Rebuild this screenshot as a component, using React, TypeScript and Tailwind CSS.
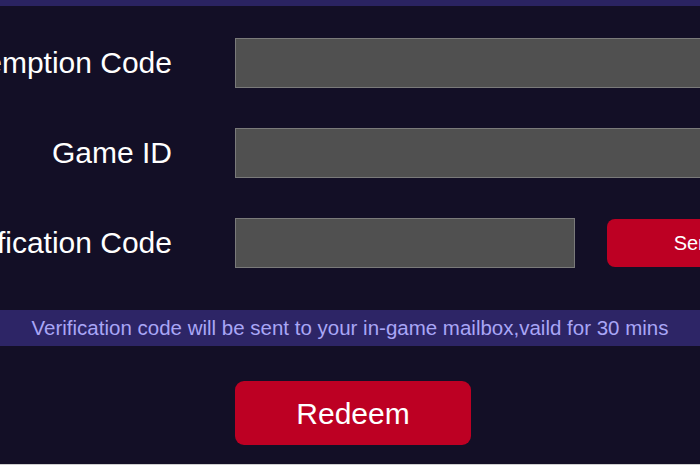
import React from 'react';

const font = { fontFamily: '"Liberation Sans", Arial, sans-serif' };

function Row({ label, children }: { label: string; children: React.ReactNode }) {
  return (
    <div className="flex items-center h-[50px]">
      <div className="w-[172px] shrink-0 flex justify-end whitespace-nowrap text-white text-[30px] leading-none">
        {label}
      </div>
      <div className="ml-[63px] flex items-center gap-[32px]">{children}</div>
    </div>
  );
}

function Field({ width }: { width: string }) {
  return (
    <input
      type="text"
      className={`${width} h-[50px] shrink-0 bg-[#505050] border border-[#7a7a7a] outline-none text-white px-2`}
    />
  );
}

export default function App() {
  return (
    <div className="w-[700px] h-[465px] overflow-hidden bg-[#130f26] flex flex-col" style={font}>
      <div className="h-[6px] shrink-0 bg-[#2a2361]" />
      <div className="flex flex-col gap-[40px] pt-[32px]">
        <Row label="Redemption Code">
          <Field width="w-[525px]" />
        </Row>
        <Row label="Game ID">
          <Field width="w-[525px]" />
        </Row>
        <Row label="Verification Code">
          <Field width="w-[340px]" />
          <button className="w-[180px] h-[48px] shrink-0 rounded-[8px] bg-[#bd0023] text-white text-[20px]">
            Send
          </button>
        </Row>
      </div>
      <div className="mt-[42px] h-[36px] shrink-0 bg-[#2d2566] flex items-center justify-center text-[#a9a6f6] text-[20.5px] whitespace-nowrap">
        Verification code will be sent to your in-game mailbox,vaild for 30 mins
      </div>
      <div className="mt-[35px] pl-[235px]">
        <button className="w-[236px] h-[64px] rounded-[9px] bg-[#bd0023] text-white text-[30px]">
          Redeem
        </button>
      </div>
      <div className="flex-1" />
      <div className="h-[1px] shrink-0 bg-[#cfcfcf]" />
    </div>
  );
}
